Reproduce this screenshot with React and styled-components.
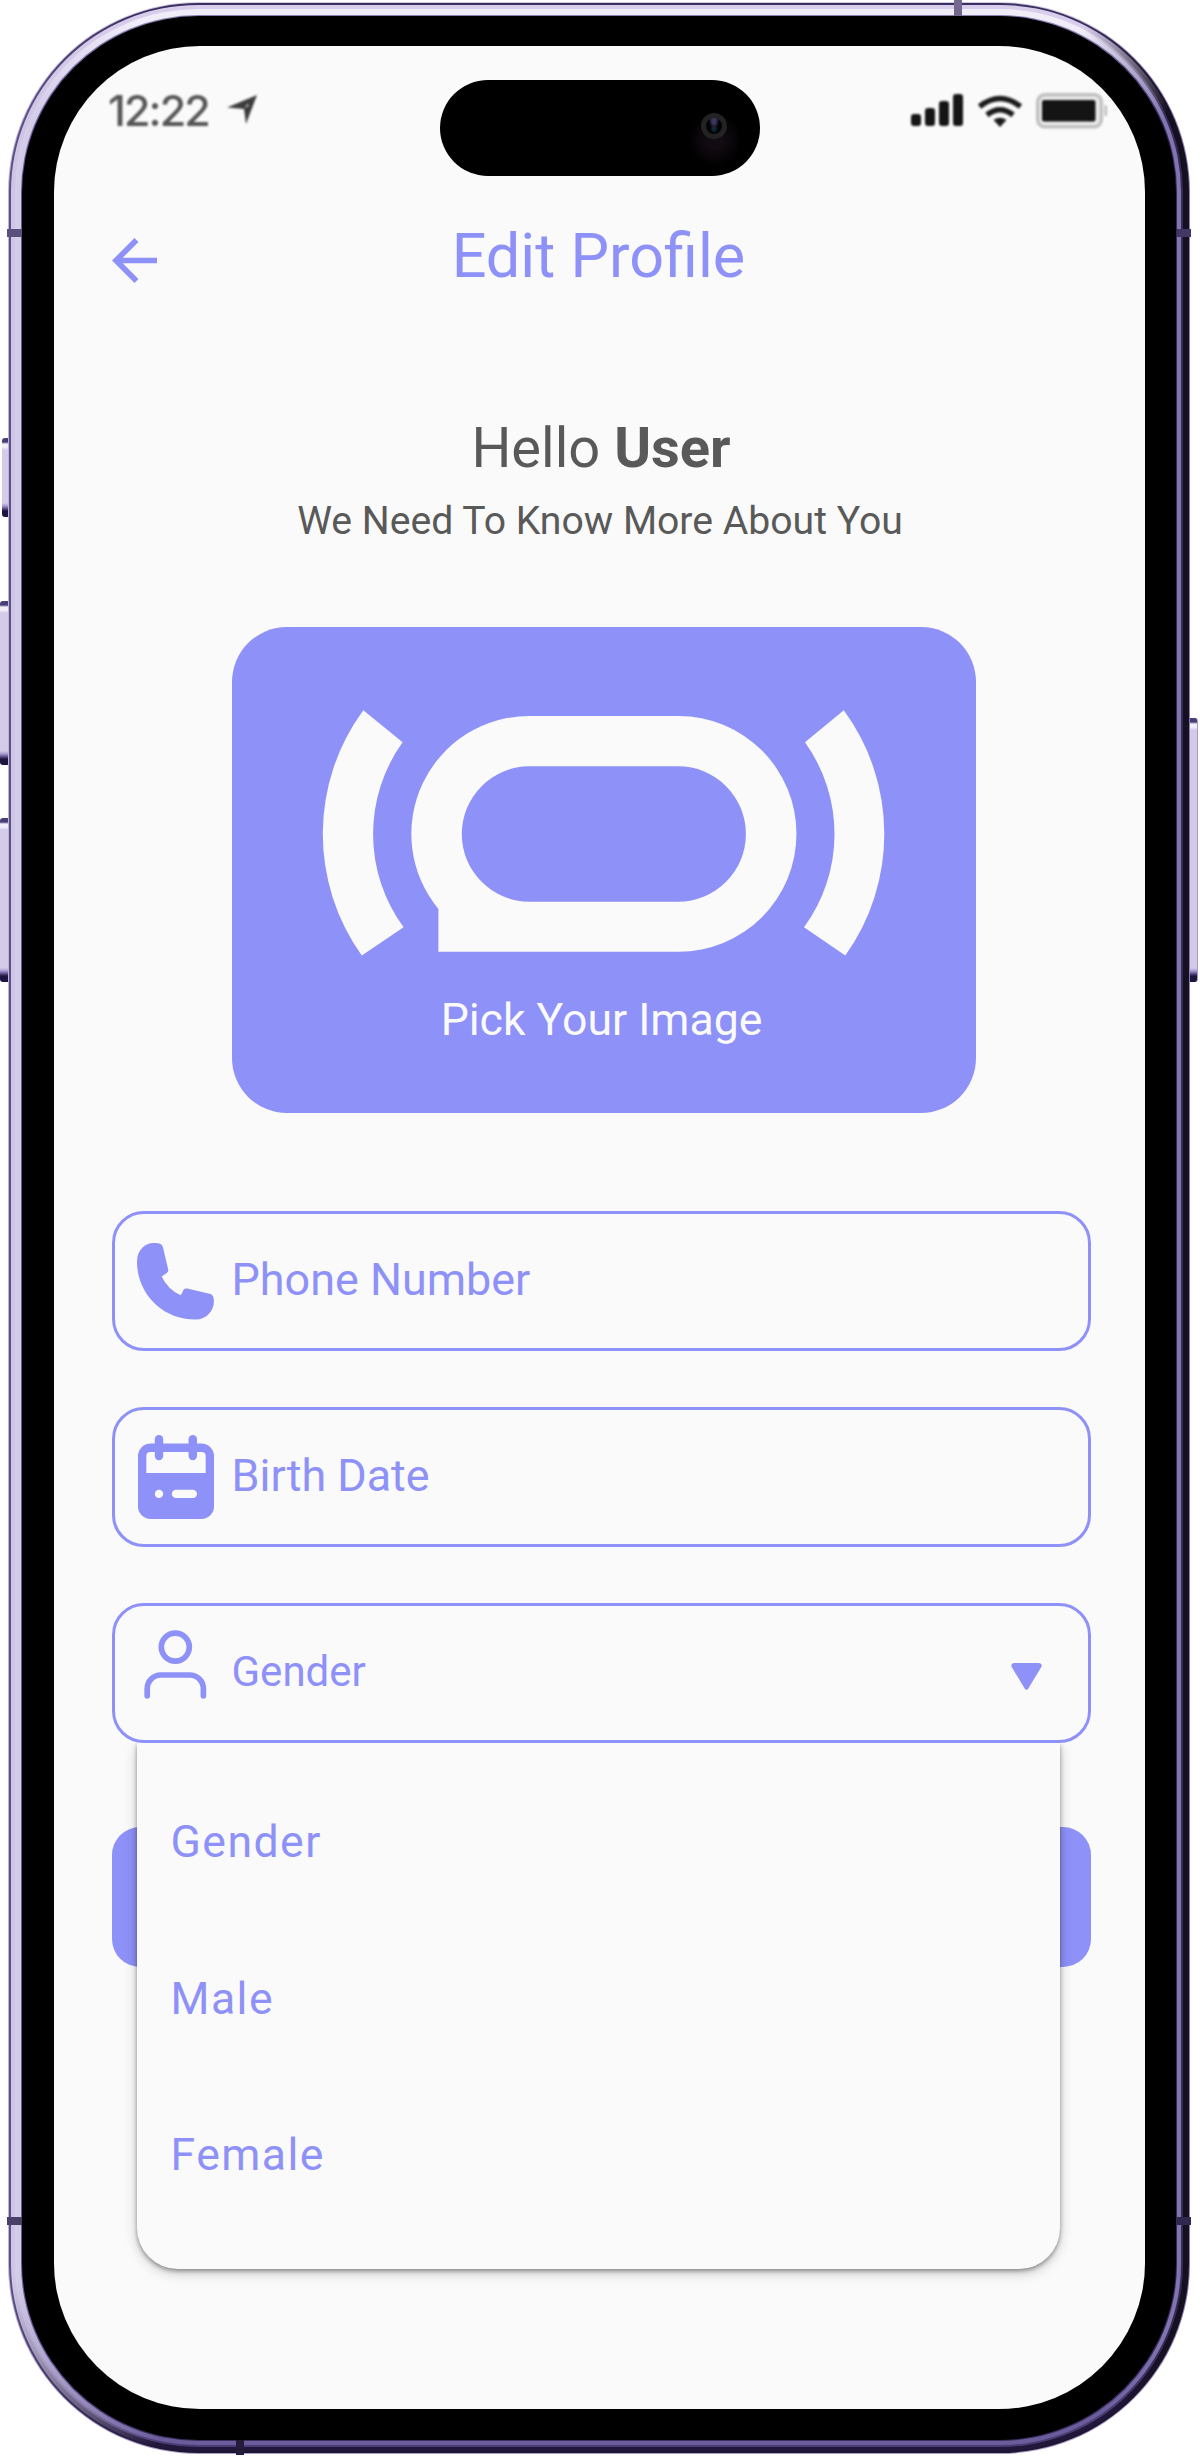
import React from "react";
import styled, { createGlobalStyle, css } from "styled-components";

const ACCENT = "#8e91f8";
const PAPER = "#fafafa";

const GlobalStyle = createGlobalStyle`
  *, *::before, *::after { box-sizing: border-box; }
  body {
    margin: 0;
    background: #fff;
    font-family: Roboto, "Liberation Sans", sans-serif;
    color: #595959;
  }
`;

/* ---------- device ---------- */

const Stage = styled.div`
  position: relative;
  width: 1200px;
  height: 2457px;
  padding: 2px 10px 3px 8px;
  overflow: hidden;
`;

const Ring = styled.div`
  height: 100%;
  padding: ${(p) => p.$t}px;
  border-radius: ${(p) => p.$r}px;
  background: conic-gradient(
    ${(p) => p.$top} 0deg 22deg,
    ${(p) => p.$right} 27deg 153deg,
    ${(p) => p.$bottom} 157deg 200deg,
    ${(p) => p.$left} 209deg 333deg,
    ${(p) => p.$top} 339deg 360deg
  );
`;

const Bezel = styled.div`
  height: 100%;
  padding: 30px 31px 31px 32px;
  border-radius: 177px;
  background: #000;
`;

const Screen = styled.main`
  height: 100%;
  display: flex;
  flex-direction: column;
  border-radius: 146px;
  background: ${PAPER};
`;

const SideKey = styled.div`
  position: absolute;
  left: ${(p) => p.$x}px;
  top: ${(p) => p.$y}px;
  width: ${(p) => p.$w}px;
  height: ${(p) => p.$h}px;
  border-radius: ${(p) => (p.$right ? "0 3px 3px 0" : "3px 0 0 3px")};
  background: linear-gradient(
    #4a3f75 0 4px,
    #f3f0fa 6px 9px,
    #d3cbe8 12px calc(100% - 14px),
    #a597d2 calc(100% - 11px),
    #1d1440 calc(100% - 6px) 100%
  );
  border: 0 solid #a99bd0;
  border-right-width: ${(p) => (p.$right ? 1 : 0)}px;
`;

const Band = styled.div`
  position: absolute;
  left: ${(p) => p.$x}px;
  top: ${(p) => p.$y}px;
  width: ${(p) => p.$w}px;
  height: ${(p) => p.$h}px;
  background: ${(p) => p.$c};
`;

/* ---------- status bar ---------- */

const StatusBar = styled.div`
  display: grid;
  grid-template-columns: 386px 320px 1fr;
  height: 134px;
  padding-top: 34px;
`;

const StatusLeft = styled.div`
  display: flex;
  align-items: center;
  height: 60px;
  padding: 0 0 1px 54px;
  gap: 15px;
  filter: blur(0.8px);
`;

const Time = styled.span`
  width: 104px;
  font: 500 43px/60px Inter, "Liberation Sans", sans-serif;
  letter-spacing: -1.9px;
  white-space: nowrap;
  color: #555;
`;

const StatusRight = styled.div`
  display: flex;
  align-items: center;
  height: 60px;
  padding: 2px 0 0 151px;
  filter: blur(0.8px);
`;

const Island = styled.div`
  display: flex;
  justify-content: flex-end;
  height: 96px;
  padding: 33px 33px 0 0;
  border-radius: 48px;
  background: radial-gradient(circle at 275px 60px, #120b12 0 8px, #000 27px);
`;

const Lens = styled.div`
  width: 26px;
  height: 26px;
  border: 5px solid #232323;
  border-radius: 50%;
  background:
    radial-gradient(ellipse at 50% 15%, #3a3460 0 2px, transparent 5px),
    radial-gradient(circle at 50% 70%, #0b2a40 0 1px, transparent 4px),
    #030303;
  filter: blur(0.6px);
`;

/* ---------- page ---------- */

const Header = styled.header`
  display: grid;
  grid-template-columns: 45px 1fr 45px;
  align-items: center;
  height: 152px;
  padding: 0 60px 0 58px;
`;

const BackIcon = styled.svg`
  width: 45px;
  height: 45px;
  margin-top: 9px;
`;

const Title = styled.h1`
  margin: 0;
  text-align: center;
  font-size: 61.2px;
  line-height: 72px;
  font-weight: 400;
  color: ${ACCENT};
`;

const Greeting = styled.p`
  margin: 83px 0 0;
  padding-left: 3px;
  text-align: center;
  font-size: 56px;
  line-height: 66px;
  white-space: pre;
`;

const Strong = styled.strong`
  font-weight: 700;
`;

const Subtitle = styled.p`
  margin: 17px 0 0;
  padding-left: 1px;
  text-align: center;
  font-size: 39.15px;
  line-height: 46px;
`;

const PickCard = styled.button`
  display: flex;
  flex-direction: column;
  align-items: center;
  width: 744px;
  height: 486px;
  margin: 83px 0 0 178px;
  padding: 83px 0 0;
  border: 0;
  border-radius: 55px;
  background: ${ACCENT};
  font: 400 44.6px/52px Roboto, "Liberation Sans", sans-serif;
  color: ${PAPER};
`;

const PickArt = styled.svg`
  width: 564px;
  height: 246px;
  margin-bottom: 38px;
`;

const PickLabel = styled.span`
  padding-right: 5px;
`;

const Form = styled.form`
  display: flex;
  flex-direction: column;
  gap: 56px;
  margin: 98px 54px 0 58px;
`;

const frame = css`
  height: 140px;
  border-radius: 32px;
`;

const Field = styled.div`
  ${frame}
  position: relative;
  display: flex;
  align-items: center;
  padding-left: 22px;
  border: 3px solid ${ACCENT};
  color: ${ACCENT};
  background: ${PAPER};
  z-index: ${(p) => (p.$open ? 2 : 0)};
`;

const IconSlot = styled.span`
  display: flex;
  justify-content: center;
  width: 77px;
  margin-right: 17.5px;
  margin-bottom: ${(p) => p.$lift || 0}px;
`;

const FieldText = styled.span`
  flex: 1;
  padding-bottom: 2px;
  font-size: ${(p) => p.$size}px;
  line-height: 54px;
  white-space: nowrap;
`;

const Caret = styled.svg`
  width: 31px;
  height: 27px;
  margin: 7px 46px 0 0;
`;

const MenuClip = styled.div`
  position: absolute;
  top: 137px;
  left: 0;
  right: 0;
  height: 560px;
  padding: 0 28px 0 22px;
  overflow: hidden;
`;

const Menu = styled.ul`
  height: 526px;
  margin: 0;
  padding: 21px 0 0 33.5px;
  list-style: none;
  border-radius: 0 0 41px 41px;
  background: ${PAPER};
  box-shadow: 0 2px 4px rgba(0, 0, 0, 0.36), 0 4px 13px rgba(0, 0, 0, 0.2);
`;

const Option = styled.li`
  height: 156.7px;
  font-size: 44.6px;
  line-height: 156.7px;
  letter-spacing: 1.45px;
`;

const Submit = styled.button`
  height: 140px;
  margin-top: 28px;
  border: 0;
  border-radius: 28px;
  background: ${ACCENT};
`;

/* ---------- icons ---------- */

const StatusGlyph = styled.svg`
  flex: none;
  margin-left: ${(p) => p.$gap || 0}px;
`;

const LocationIcon = () => (
  <StatusGlyph width="31" height="30" viewBox="0 0 31 30">
    <path d="M30 0 L19 29 L17 14 L0 12.500 Z" fill="#3c3c3c" />
    <path d="M20.500 8.500 L17.500 13 L22 11 Z" fill="#aaa" />
  </StatusGlyph>
);

const SignalIcon = () => (
  <StatusGlyph width="53" height="34" viewBox="0 0 53 34">
    <g fill="#151515">
      <rect x="0" y="20" width="10" height="12" rx="3" />
      <rect x="14" y="14" width="10" height="18" rx="3" />
      <rect x="28" y="7" width="10" height="25" rx="3" />
      <rect x="42" y="0" width="10" height="32" rx="3" />
    </g>
  </StatusGlyph>
);

const WifiIcon = () => (
  <StatusGlyph $gap={14} width="44" height="33" viewBox="0 0 44 33">
    <g fill="none" stroke="#1b1b1b" strokeWidth="5.500">
      <path d="M1.500 11.500 Q22 -4.500 42.500 11.500" />
      <path d="M9 20 Q22 9.500 35 20" />
    </g>
    <path d="M15.500 25 Q22 20.500 28.500 25 L22 32 Z" fill="#1b1b1b" />
  </StatusGlyph>
);

const BatteryIcon = () => (
  <StatusGlyph $gap={14} width="72" height="36" viewBox="0 0 72 36">
    <rect x="1.750" y="1.750" width="63.500" height="32" rx="7" fill="#ededed" stroke="#c0c0c0" strokeWidth="3.500" />
    <rect x="6" y="7" width="53.500" height="21.500" rx="2" fill="#141414" />
    <rect x="68.500" y="12" width="2.500" height="11" rx="1" fill="#bbb" />
  </StatusGlyph>
);

const PhoneIcon = () => (
  <svg width="77" height="77" viewBox="0 0 77 77" fill="currentColor">
    <path d="M0 18.700 C0 7 8 0 16.500 0 C20 0 22 .3 23.500 .9 Q25.500 1.800 26 4.400 L31.300 27 Q31.500 28.800 29.700 30 L24.700 33.400 Q30.500 46 43.700 52.300 L46.800 46.500 Q48 45 50.300 45.500 L73.500 51 Q76.900 52 76.900 58.500 C76.900 68 69 76.600 59 76.600 C25 77 0 50 0 18.700 Z" />
  </svg>
);

const CalendarIcon = () => (
  <svg width="76" height="84" viewBox="0 0 76 84" fill="currentColor">
    <path
      fillRule="evenodd"
      d="M12.500 8.500 H63.500 A12.500 12.500 0 0 1 76 21 V71.500 A12.500 12.500 0 0 1 63.500 84 H12.500 A12.500 12.500 0 0 1 0 71.500 V21 A12.500 12.500 0 0 1 12.500 8.500 Z M12.300 17 A4 4 0 0 0 8.300 21 V38 H67.700 V21 A4 4 0 0 0 63.700 17 Z M21 54.700 A4.200 4.200 0 1 0 21 63.100 A4.200 4.200 0 1 0 21 54.700 Z M38 54.700 A4.200 4.200 0 0 0 38 63.100 H54.800 A4.200 4.200 0 0 0 54.800 54.700 Z"
    />
    <rect x="16.800" y="0" width="8.400" height="25.200" rx="4.200" />
    <rect x="50.600" y="0" width="8.400" height="25.200" rx="4.200" />
  </svg>
);

const PersonIcon = () => (
  <svg width="63" height="69" viewBox="0 0 63 69" fill="none" stroke="currentColor" strokeWidth="5.700">
    <circle cx="31.300" cy="17.100" r="14" />
    <path strokeLinecap="round" d="M3.200 65.800 V58.700 A13.700 13.700 0 0 1 16.900 45 H45.700 A13.700 13.700 0 0 1 59.400 58.700 V65.800" />
  </svg>
);

const fields = [
  { label: "Phone Number", Icon: PhoneIcon, size: 44.9 },
  { label: "Birth Date", Icon: CalendarIcon, size: 44.9 },
];

const options = ["Gender", "Male", "Female"];

const rings = [
  { $t: 1, $r: 190, $top: "#cfc9e0", $right: "#8b7bb5", $bottom: "#a79fc5", $left: "#bdb4da" },
  { $t: 2, $r: 189, $top: "#3a2f60", $right: "#17111f", $bottom: "#1e1535", $left: "#5d4f88" },
  { $t: 4, $r: 187, $top: "#d8cdea", $right: "#15101f", $bottom: "#20173a", $left: "#cfc6e5" },
  { $t: 2, $r: 183, $top: "#f0ecf8", $right: "#352b58", $bottom: "#4a3d75", $left: "#d6cde9" },
  { $t: 4, $r: 181, $top: "#f0ecf8", $right: "#8374b0", $bottom: "#6b5c9c", $left: "#d4cbe8" },
  { $t: 1, $r: 177, $top: "#8a80b0", $right: "#332a5c", $bottom: "#3a2f60", $left: "#6a5c99" },
];

const keys = [
  { $x: 2, $y: 438, $w: 6, $h: 79 },
  { $x: 0, $y: 601, $w: 8, $h: 164 },
  { $x: 0, $y: 818, $w: 8, $h: 164 },
  { $x: 1190, $y: 718, $w: 8, $h: 264, $right: true },
];

const bands = [
  { $x: 7, $y: 229, $w: 15, $h: 8, $c: "#5b4f7c" },
  { $x: 1177, $y: 229, $w: 14, $h: 8, $c: "#453764" },
  { $x: 7, $y: 2217, $w: 15, $h: 8, $c: "#4b4068" },
  { $x: 1177, $y: 2217, $w: 14, $h: 8, $c: "#32284f" },
  { $x: 954, $y: 0, $w: 8, $h: 16, $c: "#75688f" },
  { $x: 236, $y: 2440, $w: 8, $h: 15, $c: "#241b38" },
];

const Shell = ({ layers, children }) =>
  layers.reduceRight((inner, ring) => <Ring {...ring}>{inner}</Ring>, children);

export default function App() {
  return (
    <>
      <GlobalStyle />
      <Stage>
        {keys.map((k) => (
          <SideKey key={k.$y} {...k} />
        ))}
        <Shell layers={rings}>
          <Bezel>
            <Screen>
              <StatusBar>
                <StatusLeft>
                  <Time>12:22</Time>
                  <LocationIcon />
                </StatusLeft>
                <Island>
                  <Lens />
                </Island>
                <StatusRight>
                  <SignalIcon />
                  <WifiIcon />
                  <BatteryIcon />
                </StatusRight>
              </StatusBar>

              <Header>
                <BackIcon viewBox="4 4 16 16" fill={ACCENT}>
                  <path d="M20 11H7.830l5.590-5.590L12 4l-8 8 8 8 1.410-1.410L7.830 13H20v-2z" />
                </BackIcon>
                <Title>Edit Profile</Title>
              </Header>

              <Greeting>
                Hello <Strong>User</Strong>
              </Greeting>
              <Subtitle>We Need To Know More About You</Subtitle>

              <PickCard type="button">
                <PickArt viewBox="321 710 564 246" fill={PAPER}>
                  <path d="M362.300 710.300 L401.600 742.300 A157.600 157.600 0 0 0 402.600 927.300 L360.800 955.500 A209 209 0 0 1 362.300 710.300 Z" />
                  <path d="M842.800 710.300 L804 742.300 A157.600 157.600 0 0 1 803 927.300 L844.300 955.500 A209 209 0 0 0 842.800 710.300 Z" />
                  <path
                    fillRule="evenodd"
                    d="M528.800 716 H677.700 A117.850 117.850 0 0 1 677.700 951.700 H437.400 V909 A117.850 117.850 0 0 1 528.800 716 Z M528.500 766.300 A67.700 67.700 0 0 0 528.500 901.700 H677.200 A67.700 67.700 0 0 0 677.200 766.300 Z"
                  />
                </PickArt>
                <PickLabel>Pick Your Image</PickLabel>
              </PickCard>

              <Form>
                {fields.map(({ label, Icon, size }) => (
                  <Field key={label}>
                    <IconSlot>
                      <Icon />
                    </IconSlot>
                    <FieldText $size={size}>{label}</FieldText>
                  </Field>
                ))}
                <Field $open>
                  <IconSlot $lift={18}>
                    <PersonIcon />
                  </IconSlot>
                  <FieldText $size={42}>Gender</FieldText>
                  <Caret viewBox="0 0 31 27" fill={ACCENT}>
                    <path d="M3 0 H28 Q32 .8 30 4.500 L17.300 25.500 Q15.500 28.300 13.700 25.500 L1 4.500 Q-1 .8 3 0 Z" />
                  </Caret>
                  <MenuClip>
                    <Menu>
                      {options.map((o) => (
                        <Option key={o}>{o}</Option>
                      ))}
                    </Menu>
                  </MenuClip>
                </Field>
                <Submit type="button" aria-label="Submit" />
              </Form>
            </Screen>
          </Bezel>
        </Shell>
        {bands.map((b) => (
          <Band key={`${b.$x}-${b.$y}`} {...b} />
        ))}
      </Stage>
    </>
  );
}
